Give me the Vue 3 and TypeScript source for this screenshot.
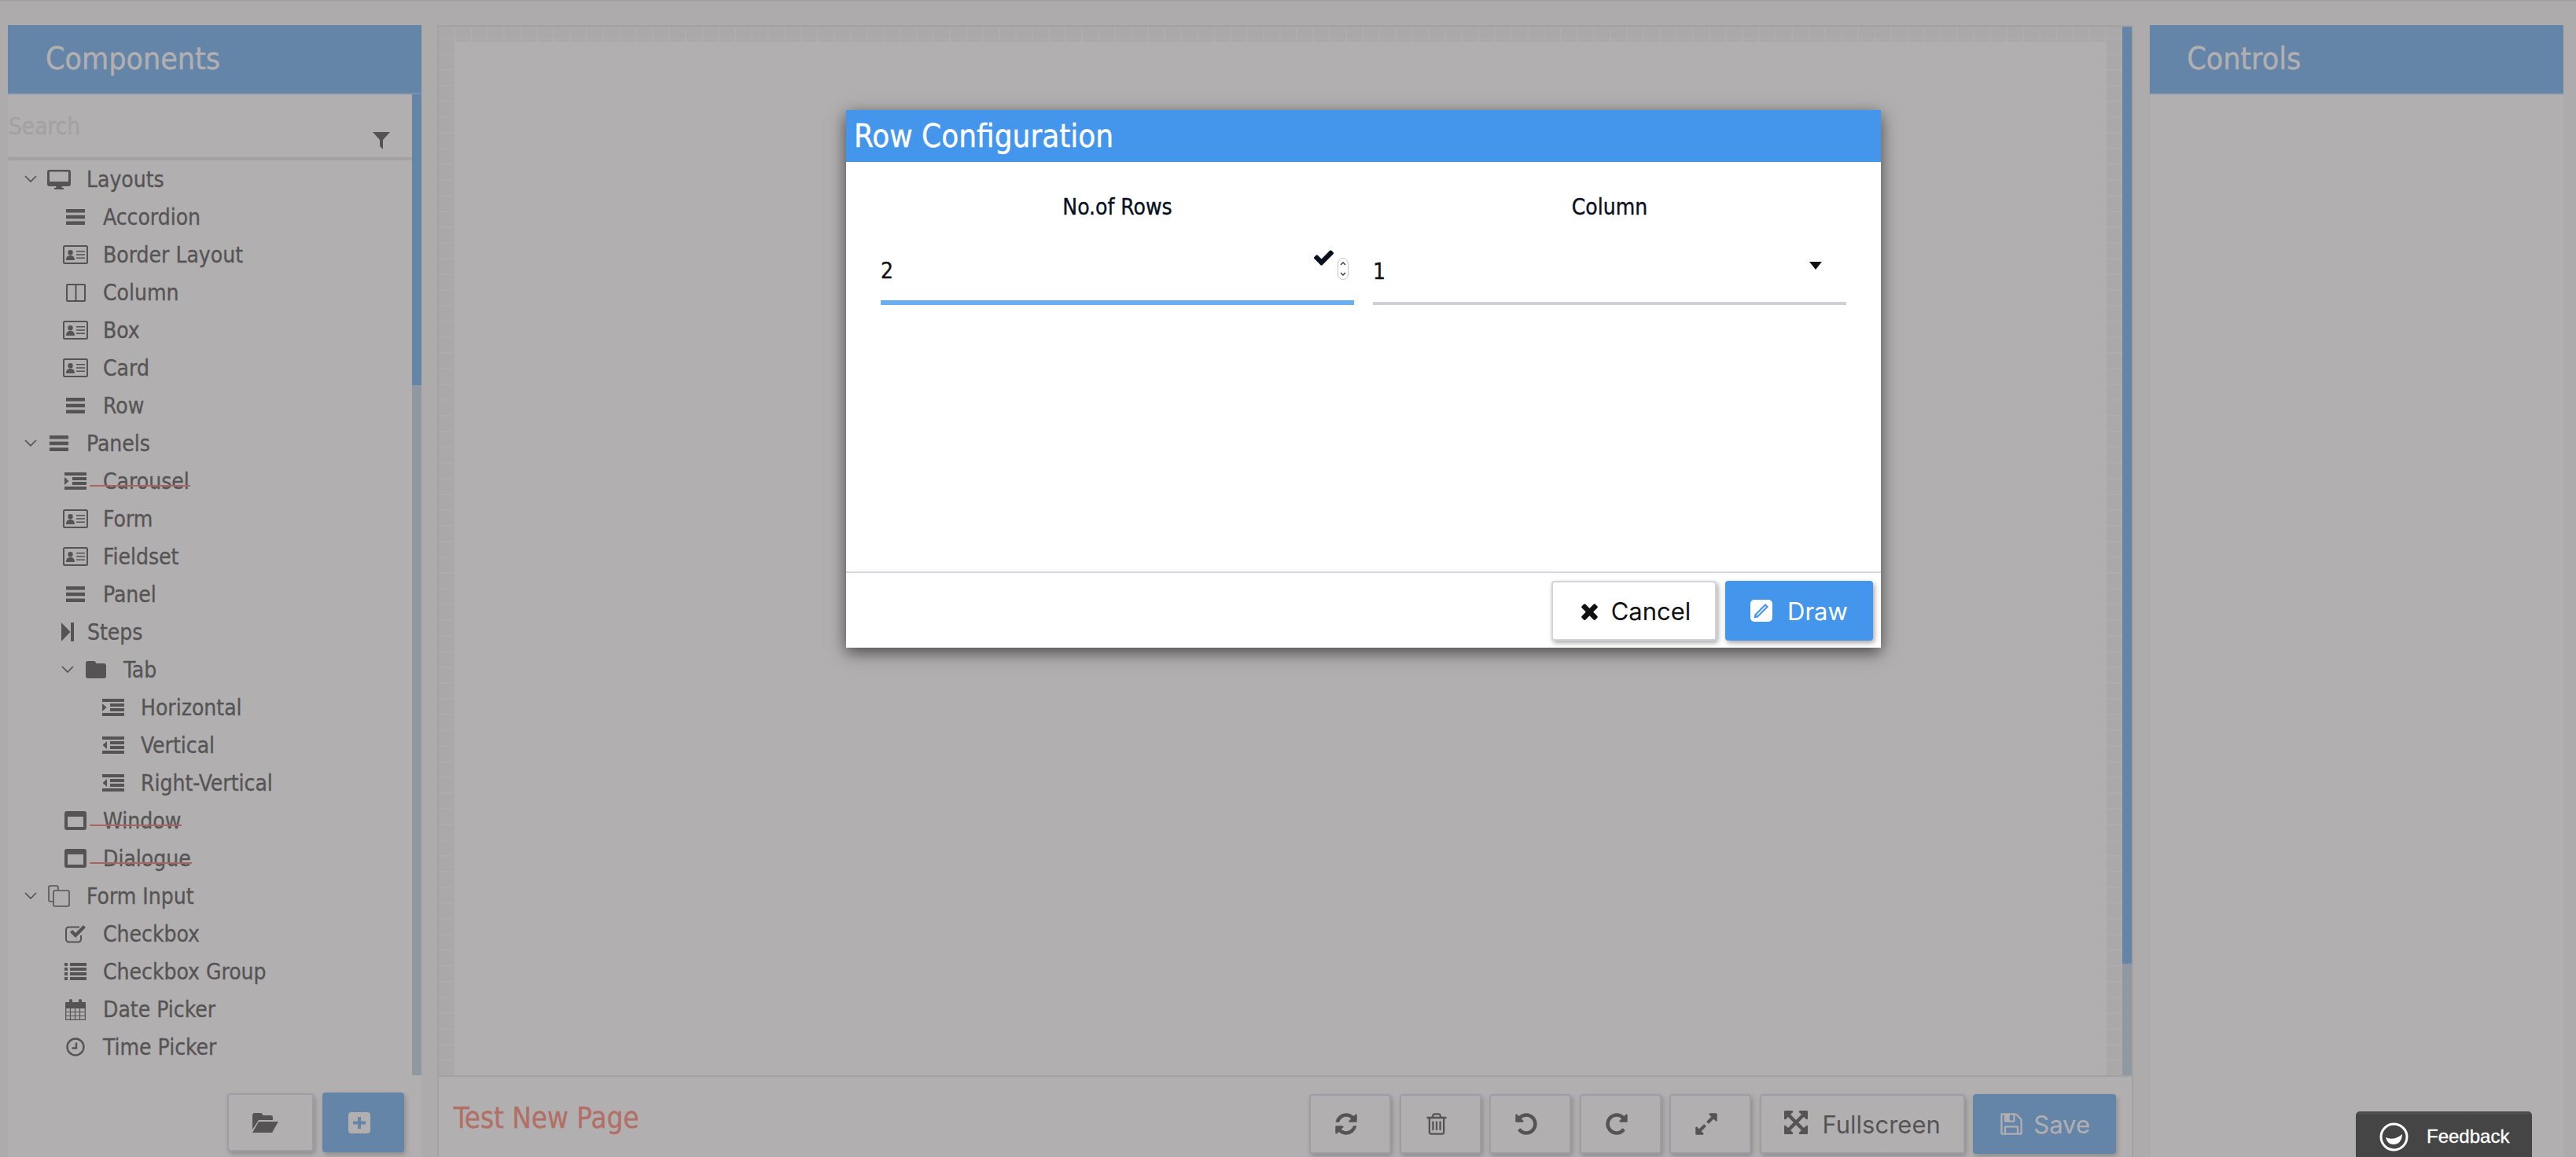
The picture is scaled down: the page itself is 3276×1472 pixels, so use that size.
<script setup lang="ts">
import { h } from 'vue'

type IconDef = { w: number; h: number; vb?: string; d?: string; ds?: string; sw?: number }

const FA = '0 0 1792 1792'
const icons: Record<string, IconDef> = {
  desktop: { w: 30, h: 25, d: 'M3 0h24a3 3 0 0 1 3 3v15a3 3 0 0 1-3 3H18.5l.5 2h2v2H9v-2h2l.5-2H3a3 3 0 0 1-3-3V3a3 3 0 0 1 3-3z M3 2.5V15h24V2.5z' },
  bars: { w: 24, h: 20, d: 'M0 0h24v4.5H0z M0 7.75h24v4.5H0z M0 15.5h24V20H0z' },
  card: { w: 32, h: 24, d: 'M2.5 0h27A2.5 2.5 0 0 1 32 2.5v19a2.5 2.5 0 0 1-2.5 2.5h-27A2.5 2.5 0 0 1 0 21.5v-19A2.5 2.5 0 0 1 2.5 0z M2.5 2a.5.5 0 0 0-.5.5v19a.5.5 0 0 0 .5.5h27a.5.5 0 0 0 .5-.5v-19a.5.5 0 0 0-.5-.5z M9.5 6a3.2 3.2 0 1 1 0 6.4 3.2 3.2 0 0 1 0-6.4z M4 19c0-4 2-6 5.500-6s5.500 2 5.500 6z M17 7h11v1.600H17z M17 11.200h11v1.600H17z M17 15.400h11V17H17z' },
  columns: { w: 25, h: 23, d: 'M2 0h21a2 2 0 0 1 2 2v19a2 2 0 0 1-2 2H2a2 2 0 0 1-2-2V2a2 2 0 0 1 2-2z M2 2v19h9.500V2z M13.500 2v19H23V2z' },
  indent: { w: 28, h: 22, d: 'M0 0h28v4H0z M0 18h28v4H0z M10 6h18v4H10z M10 12h18v4H10z M0 6l5.500 5L0 16z' },
  outdent: { w: 28, h: 22, d: 'M0 0h28v4H0z M0 18h28v4H0z M10 6h18v4H10z M10 12h18v4H10z M6 6L.5 11 6 16z' },
  step: { w: 16, h: 24, d: 'M0 0l11.500 12L0 24z M12 0h4v24h-4z' },
  folder: { w: 26, h: 22, d: 'M3 0h7a3 3 0 0 1 3 3h10a3 3 0 0 1 3 3v13a3 3 0 0 1-3 3H3a3 3 0 0 1-3-3V3a3 3 0 0 1 3-3z' },
  window: { w: 28, h: 24, d: 'M3 0h22a3 3 0 0 1 3 3v18a3 3 0 0 1-3 3H3a3 3 0 0 1-3-3V3a3 3 0 0 1 3-3z M4 7v13h20V7z' },
  copy: { w: 28, h: 28, ds: 'M7 21H3a2 2 0 0 1-2-2V3a2 2 0 0 1 2-2h8a2 2 0 0 1 2 2v3 M9 7h16a2 2 0 0 1 2 2v16a2 2 0 0 1-2 2H9a2 2 0 0 1-2-2V9a2 2 0 0 1 2-2z', sw: 1.6 },
  checkbox: { w: 26, h: 23, d: 'M6 9l3-3 4 4L23 0l3 3-13 13z', ds: 'M20 13v5a3.500 3.500 0 0 1-3.500 3.500h-12A3.500 3.500 0 0 1 1 18V6a3.500 3.500 0 0 1 3.500-3.500H18', sw: 2 },
  list: { w: 28, h: 22, d: 'M0 0h4v4H0z M7 0h21v4H7z M0 6h4v4H0z M7 6h21v4H7z M0 12h4v4H0z M7 12h21v4H7z M0 18h4v4H0z M7 18h21v4H7z' },
  calendar: { w: 26, h: 27, d: 'M0 4h5V2a2 2 0 0 1 4 0v2h8V2a2 2 0 0 1 4 0v2h5v8H0z', ds: 'M.7 11v15.300h24.600V11 M6.500 12v14 M12.500 12v14 M18.500 12v14 M1 16.500h24 M1 21.500h24', sw: 1.2 },
  clock: { w: 24, h: 24, ds: 'M12 1.500a10.500 10.500 0 1 0 0 21 10.500 10.500 0 0 0 0-21z M13 6.500V13.500H7.500', sw: 2.4 },
  chev: { w: 16, h: 10, ds: 'M1 1l7 7 7-7', sw: 1.7 },
  filter: { w: 22, h: 22, d: 'M0 0h22L13 10v12l-4-4V10z' },
  open: { w: 33, h: 25, d: 'M0 3a3 3 0 0 1 3-3h7a3 3 0 0 1 3 3h10a3 3 0 0 1 3 3v3H8L0 21z M8 11h25L25 25H0z' },
  plus: { w: 28, h: 27, d: 'M4 0h20a4 4 0 0 1 4 4v19a4 4 0 0 1-4 4H4a4 4 0 0 1-4-4V4a4 4 0 0 1 4-4z M12 6v5.500H6v4h6V21h4v-5.500h6v-4h-6V6z' },
  refresh: { w: 32, h: 32, vb: FA, d: 'M1639 1056q0 5-1 7-64 268-268 434.5t-478 166.5q-146 0-282.5-55t-243.5-157l-129 129q-19 19-45 19t-45-19-19-45v-448q0-26 19-45t45-19h448q26 0 45 19t19 45-19 45l-137 137q71 66 161 102t187 36q134 0 250-65t186-179q11-17 53-117 8-23 30-23h192q13 0 22.500 9.500t9.500 22.500zm25-800v448q0 26-19 45t-45 19h-448q-26 0-45-19t-19-45 19-45l138-138q-148-137-349-137-134 0-250 65t-186 179q-11 17-53 117-8 23-30 23h-199q-13 0-22.500-9.500t-9.500-22.500v-7q65-268 270-434.500t480-166.500q146 0 284 55.500t245 156.500l130-129q19-19 45-19t45 19 19 45z' },
  trash: { w: 32, h: 32, vb: FA, d: 'M704 736v576q0 14-9 23t-23 9h-64q-14 0-23-9t-9-23v-576q0-14 9-23t23-9h64q14 0 23 9t9 23zm256 0v576q0 14-9 23t-23 9h-64q-14 0-23-9t-9-23v-576q0-14 9-23t23-9h64q14 0 23 9t9 23zm256 0v576q0 14-9 23t-23 9h-64q-14 0-23-9t-9-23v-576q0-14 9-23t23-9h64q14 0 23 9t9 23zm128 724v-948h-896v948q0 22 7 40.500t14.500 27 10.500 8.500h832q3 0 10.500-8.500t14.500-27 7-40.500zm-672-1076h448l-48-117q-7-9-17-11h-317q-10 2-17 11zm928 32v64q0 14-9 23t-23 9h-96v948q0 83-47 143.500t-113 60.500h-832q-66 0-113-58.500t-47-141.500v-952h-96q-14 0-23-9t-9-23v-64q0-14 9-23t23-9h309l70-167q15-37 54-63t79-26h320q40 0 79 26t54 63l70 167h309q14 0 23 9t9 23z' },
  undo: { w: 32, h: 32, vb: FA, d: 'M1664 896q0 156-61 298t-164 245-245 164-298 61q-172 0-327-72.500t-264-204.500q-7-10-6.500-22.500t8.500-20.500l137-138q10-9 25-9 16 2 23 12 73 95 179 147t225 52q104 0 198.500-40.500t163.500-109.500 109.500-163.500 40.500-198.500-40.500-198.500-109.500-163.500-163.500-109.500-198.500-40.500q-98 0-188 35.500t-160 101.500l137 138q31 30 14 69-17 40-59 40h-448q-26 0-45-19t-19-45v-448q0-42 40-59 39-17 69 14l130 129q107-101 244.500-156.500t284.500-55.500q156 0 298 61t245 164 164 245 61 298z' },
  redo: { w: 32, h: 32, vb: FA, d: 'M1664 256v448q0 26-19 45t-45 19h-448q-42 0-59-40-17-39 14-69l138-138q-148-137-349-137-104 0-198.500 40.500t-163.500 109.500-109.500 163.500-40.500 198.500 40.500 198.500 109.500 163.500 163.500 109.500 198.500 40.500q119 0 225-52t179-147q7-10 23-12 15 0 25 9l137 138q9 8 9.500 20.500t-7.500 22.500q-109 132-264 204.500t-327 72.500q-156 0-298-61t-245-164-164-245-61-298 61-298 164-245 245-164 298-61q147 0 284.500 55.500t244.500 156.500l130-129q29-31 70-14 39 17 39 59z' },
  expand: { w: 32, h: 32, vb: FA, d: 'M883 1056q0 13-10 23l-332 332 144 144q19 19 19 45t-19 45-45 19h-448q-26 0-45-19t-19-45v-448q0-26 19-45t45-19 45 19l144 144 332-332q10-10 23-10t23 10l114 114q10 10 10 23zm781-864v448q0 26-19 45t-45 19-45-19l-144-144-332 332q-10 10-23 10t-23-10l-114-114q-10-10-10-23t10-23l332-332-144-144q-19-19-19-45t19-45 45-19h448q26 0 45 19t19 45z' },
  arrows: { w: 35, h: 35, vb: FA, d: 'M1283 413l-355 355 355 355 144-144q29-31 70-14 39 17 39 59v448q0 26-19 45t-45 19h-448q-42 0-59-40-17-39 14-69l144-144-355-355-355 355 144 144q31 30 14 69-17 40-59 40h-448q-26 0-45-19t-19-45v-448q0-42 40-59 39-17 69 14l144 144 355-355-355-355-144 144q-19 19-45 19-12 0-24-5-40-17-40-59v-448q0-26 19-45t45-19h448q42 0 59 40 17 39-14 69l-144 144 355 355 355-355-144-144q-31-30-14-69 17-40 59-40h448q26 0 45 19t19 45v448q0 42-39 59-13 5-25 5-26 0-45-19z' },
  save: { w: 32, h: 32, vb: FA, d: 'M512 1536h768v-384h-768v384zm896 0h128v-896q0-14-10-38.500t-20-34.500l-281-281q-10-10-34-20t-39-10v416q0 40-28 68t-68 28h-576q-40 0-68-28t-28-68v-416h-128v1280h128v-416q0-40 28-68t68-28h832q40 0 68 28t28 68v416zm-384-928v-320q0-13-9.500-22.500t-22.500-9.500h-192q-13 0-22.500 9.500t-9.500 22.500v320q0 13 9.500 22.500t22.500 9.500h192q13 0 22.500-9.500t9.500-22.500zm640 32v928q0 40-28 68t-68 28h-1344q-40 0-68-28t-28-68v-1344q0-40 28-68t68-28h928q40 0 88 20t76 48l280 280q28 28 48 76t20 88z' },
  check: { w: 29, h: 29, vb: FA, d: 'M1671 566q0 40-28 68l-724 724-136 136q-28 28-68 28t-68-28l-136-136-362-362q-28-28-28-68t28-68l136-136q28-28 68-28t68 28l294 295 656-657q28-28 68-28t68 28l136 136q28 28 28 68z' },
  times: { w: 31, h: 31, vb: FA, d: 'M1490 1322q0 40-28 68l-136 136q-28 28-68 28t-68-28l-294-294-294 294q-28 28-68 28t-68-28l-136-136q-28-28-28-68t28-68l294-294-294-294q-28-28-28-68t28-68l136-136q28-28 68-28t68 28l294 294 294-294q28-28 68-28t68 28l136 136q28 28 28 68t-28 68l-294 294 294 294q28 28 28 68z' },
  draw: { w: 28, h: 28, d: 'M5 0h18a5 5 0 0 1 5 5v18a5 5 0 0 1-5 5H5a5 5 0 0 1-5-5V5a5 5 0 0 1 5-5z M19 5L5.500 18.500 4.500 23.500l5-1L23 9z M19 8l1 1-11 11-1.500.5.5-1.500z' },
  spin: { w: 8, h: 22, ds: 'M1 6l3-3 3 3 M1 16l3 3 3-3', sw: 1.3 },
  caret: { w: 16, h: 10, d: 'M0 0h16L8 10z' },
  smile: { w: 37, h: 37, d: 'M8 19Q18 24 29 15 28 28 18 28 10 28 8 19z', ds: 'M18.500 2a16.500 16.500 0 1 0 0 33 16.500 16.500 0 0 0 0-33z', sw: 3 },
}

// Renders one entry of the icon table as inline SVG.
const Ic = (props: { n: string }) => {
  const i = icons[props.n]
  const parts = []
  if (i.d) parts.push(h('path', { d: i.d, fill: 'currentColor', 'fill-rule': 'evenodd' }))
  if (i.ds) parts.push(h('path', { d: i.ds, fill: 'none', stroke: 'currentColor', 'stroke-width': i.sw }))
  return h('svg', { width: i.w, height: i.h, viewBox: i.vb ?? `0 0 ${i.w} ${i.h}`, style: 'display:block;flex:none' }, parts)
}
Ic.props = ['n']

type Row = { label: string; icon: string; kind: string; open?: boolean; struck?: boolean }

const rows: Row[] = [
  { label: 'Layouts', icon: 'desktop', kind: 'top', open: true },
  { label: 'Accordion', icon: 'bars', kind: 'leaf' },
  { label: 'Border Layout', icon: 'card', kind: 'leaf' },
  { label: 'Column', icon: 'columns', kind: 'leaf' },
  { label: 'Box', icon: 'card', kind: 'leaf' },
  { label: 'Card', icon: 'card', kind: 'leaf' },
  { label: 'Row', icon: 'bars', kind: 'leaf' },
  { label: 'Panels', icon: 'bars', kind: 'top', open: true },
  { label: 'Carousel', icon: 'indent', kind: 'leaf', struck: true },
  { label: 'Form', icon: 'card', kind: 'leaf' },
  { label: 'Fieldset', icon: 'card', kind: 'leaf' },
  { label: 'Panel', icon: 'bars', kind: 'leaf' },
  { label: 'Steps', icon: 'step', kind: 'tight' },
  { label: 'Tab', icon: 'folder', kind: 'mid', open: true },
  { label: 'Horizontal', icon: 'indent', kind: 'deep' },
  { label: 'Vertical', icon: 'outdent', kind: 'deep' },
  { label: 'Right-Vertical', icon: 'outdent', kind: 'deep' },
  { label: 'Window', icon: 'window', kind: 'leaf', struck: true },
  { label: 'Dialogue', icon: 'window', kind: 'leaf', struck: true },
  { label: 'Form Input', icon: 'copy', kind: 'top', open: true },
  { label: 'Checkbox', icon: 'checkbox', kind: 'leaf' },
  { label: 'Checkbox Group', icon: 'list', kind: 'leaf' },
  { label: 'Date Picker', icon: 'calendar', kind: 'leaf' },
  { label: 'Time Picker', icon: 'clock', kind: 'leaf' },
]

const tools = ['refresh', 'trash', 'undo', 'redo', 'expand']
</script>

<template>
  <div class="page">
    <div class="topbar"></div>
    <div class="columns">
      <aside class="panel side">
        <header class="panel-head">Components</header>
        <div class="side-body">
          <div class="side-scroll">
            <div class="search">
              <span class="placeholder">Search</span>
              <Ic n="filter" class="filter" />
            </div>
            <div v-for="r in rows" :key="r.label" class="row" :class="r.kind">
              <span v-if="r.open" class="chev"><Ic n="chev" /></span>
              <span class="slot"><Ic :n="r.icon" /></span>
              <span class="label" :class="{ struck: r.struck }">{{ r.label }}</span>
            </div>
          </div>
          <div class="scrollbar thumb-side"><i></i></div>
        </div>
        <footer class="side-foot">
          <button class="btn open-btn"><Ic n="open" /></button>
          <button class="btn primary add-btn"><Ic n="plus" /></button>
        </footer>
      </aside>

      <main class="center">
        <div class="canvas-wrap">
          <div class="ruler">
            <div class="sheet"></div>
          </div>
          <div class="scrollbar thumb-center"><i></i></div>
        </div>
        <footer class="center-foot">
          <span class="page-name">Test New Page</span>
          <div class="toolbar">
            <button v-for="t in tools" :key="t" class="btn tool"><Ic :n="t" /></button>
            <button class="btn wide"><Ic n="arrows" /><span>Fullscreen</span></button>
            <button class="btn primary save"><Ic n="save" /><span>Save</span></button>
          </div>
        </footer>
      </main>

      <aside class="panel controls">
        <header class="panel-head">Controls</header>
      </aside>
    </div>

    <div class="mask"></div>

    <section class="modal">
      <h2 class="modal-head">Row Configuration</h2>
      <div class="modal-body">
        <div class="col">
          <div class="col-label">No.of Rows</div>
          <div class="field active">
            <span>2</span>
            <Ic n="check" class="tick" />
            <span class="spinner"><Ic n="spin" /></span>
          </div>
        </div>
        <div class="col">
          <div class="col-label">Column</div>
          <div class="field">
            <span>1</span>
            <Ic n="caret" class="caret" />
          </div>
        </div>
      </div>
      <footer class="modal-foot">
        <button class="btn cancel"><Ic n="times" /><span>Cancel</span></button>
        <button class="btn primary draw"><Ic n="draw" /><span>Draw</span></button>
      </footer>
    </section>

    <div class="feedback"><Ic n="smile" /><span>Feedback</span></div>
  </div>
</template>

<style>
html, body { margin: 0; padding: 0; }
</style>

<style scoped>
.page {
  position: relative;
  width: 3276px;
  height: 1472px;
  overflow: hidden;
  background: #f5f5f5;
  font-family: "DejaVu Sans Condensed", "DejaVu Sans", sans-serif;
  -webkit-text-stroke: .35px currentColor;
  color: #1e1e1e;
}
.topbar { height: 2px; background: #dcdcdc; }
.columns { display: flex; height: 1470px; padding: 30px 16px 0 10px; box-sizing: border-box; gap: 20px; }

.panel { width: 526px; background: #fff; display: flex; flex-direction: column; }
.panel-head {
  height: 88px;
  box-sizing: border-box;
  padding-left: 48px;
  background: #4496ec;
  border-bottom: 2px solid #7ab4f0;
  color: #fff;
  font-size: 39px;
  line-height: 86px;
}
.controls { border-left: 1px solid #ececec; }
.controls .panel-head { padding-left: 47px; }

.side-body { display: flex; height: 1248px; }
.side-scroll { flex: 1; min-width: 0; }
.search {
  display: flex;
  justify-content: space-between;
  height: 84px;
  box-sizing: border-box;
  border-bottom: 4px solid #dcdcdc;
  padding: 19px 28px 0 1px;
  font-size: 29.500px;
  color: #dcdcdc;
}
.filter { margin-top: 29px; color: #1e1e1e; }
.placeholder { line-height: 44px; }

.row { display: flex; align-items: center; height: 48px; font-size: 28px; }
.slot { width: 32px; flex: none; display: flex; justify-content: center; margin-right: 19px; }
.chev { width: 36px; flex: none; display: flex; padding-left: 8px; box-sizing: border-box; }
.top { padding-left: 13px; }
.leaf { padding-left: 70px; }
.mid { padding-left: 60px; }
.deep { padding-left: 118px; }
.tight { padding-left: 68px; }
.tight .slot { width: 16px; margin-right: 17px; }
.label { position: relative; white-space: nowrap; }
.struck::after {
  content: "";
  position: absolute;
  left: -17px;
  right: -1px;
  top: 21px;
  height: 2px;
  background: #ee4a40;
}

.scrollbar { width: 12px; flex: none; background: #b0c9d7; }
.scrollbar i { display: block; background: #4496ec; }
.thumb-side i { height: 370px; }
.thumb-center i { height: 1192px; }

.side-foot { flex: 1; display: flex; justify-content: flex-end; gap: 11px; padding: 22px 22px 0 0; align-items: flex-start; }

.btn {
  display: flex;
  align-items: center;
  justify-content: center;
  box-sizing: border-box;
  padding: 0;
  border: 2px solid #d4d4dc;
  border-radius: 4px;
  background: #fff;
  color: #111;
  font-family: Inter, "Liberation Sans", sans-serif;
  font-size: 31px;
  -webkit-text-stroke: 0;
  box-shadow: 2px 3px 6px rgba(0, 0, 0, .35);
}
.primary { background: #4496ec; border-color: #4496ec; color: #fff; }
.open-btn { width: 110px; height: 74px; padding-right: 12px; color: #1e1e1e; margin-top: 1px; }
.add-btn { width: 104px; height: 76px; padding-right: 10px; }

.center { width: 2158px; display: flex; flex-direction: column; background: #fff; border-right: 2px solid #dcdcdc; border-left: 2px solid #dcdcdc; box-sizing: border-box; }
.canvas-wrap { display: flex; height: 1338px; border-top: 2px solid #dcdcdc; border-bottom: 2px solid #dcdcdc; box-sizing: border-box; }
.ruler {
  flex: 1;
  min-width: 0;
  padding: 19px 20px 0 21px;
  box-sizing: border-box;
  background-color: #eeeeee;
  background-image:
    repeating-linear-gradient(90deg, transparent 0 19px, #f8f8f8 19px 21px),
    repeating-linear-gradient(0deg, transparent 0 18px, #f8f8f8 18px 20px);
}
.sheet { height: 100%; background: #fff; }

.center-foot { flex: 1; display: flex; justify-content: space-between; align-items: flex-start; padding: 0 20px 0 19px; }
.page-name { color: #ff6249; font-size: 36.500px; line-height: 44px; margin-top: 31px; }
.toolbar { display: flex; gap: 10.500px; margin-top: 22px; }
.toolbar .btn { height: 76px; color: #1e1e1e; }
.toolbar .primary { color: #fff; }
.tool { width: 104px; padding-right: 10px; }
.wide { width: 261px; gap: 14px; }
.save { width: 182px; gap: 12px; }

.mask { position: absolute; inset: 0; background: rgba(124, 120, 122, .594); }

.modal {
  position: absolute;
  left: 1076px;
  top: 140px;
  width: 1316px;
  height: 684px;
  display: flex;
  flex-direction: column;
  background: #fff;
  box-shadow: 0 6px 20px rgba(0, 0, 0, .6);
}
.modal-head {
  margin: 0;
  height: 66px;
  padding-left: 10px;
  background: #4496ec;
  color: #fff;
  font-size: 40px;
  font-weight: 400;
  line-height: 66px;
}
.modal-body { flex: 1; display: grid; grid-template-columns: 1fr 1fr; gap: 24px; padding: 40px 44px 0; align-content: start; }
.col-label { height: 36px; line-height: 36px; text-align: center; font-size: 28px; color: #08101f; margin-bottom: 18px; }
.field {
  position: relative;
  height: 88px;
  box-sizing: border-box;
  padding-top: 6px;
  display: flex;
  align-items: center;
  font-size: 28px;
  color: #111;
  border-bottom: 4px solid #ced0d8;
}
.active { border-bottom: 6px solid #6aaef2; }
.tick { position: absolute; left: 549px; top: 13px; color: #08101f; }
.spinner {
  position: absolute;
  left: 581px;
  top: 28px;
  width: 14px;
  height: 28px;
  box-sizing: border-box;
  border: 1px solid #c4c4c4;
  border-radius: 7px;
  display: flex;
  align-items: center;
  justify-content: center;
  color: #333;
}
.caret { position: absolute; left: 555px; top: 33px; color: #111; }

.modal-foot {
  height: 97px;
  box-sizing: border-box;
  border-top: 2px solid #d5d5dc;
  display: flex;
  justify-content: flex-end;
  gap: 11px;
  padding: 10px 10px 0 0;
}
.modal-foot .btn { height: 76px; }
.cancel { width: 210px; gap: 12px; }
.draw { width: 188px; gap: 19px; }

.feedback {
  position: absolute;
  left: 2996px;
  top: 1414px;
  width: 224px;
  height: 58px;
  box-sizing: border-box;
  padding: 2px 0 0 30px;
  display: flex;
  align-items: center;
  gap: 23px;
  background: #454545;
  border-top: 4px solid #4d4d4d;
  border-radius: 5px 5px 0 0;
  color: #fff;
  font-family: "Liberation Sans", sans-serif;
  font-size: 24px;
}
</style>
